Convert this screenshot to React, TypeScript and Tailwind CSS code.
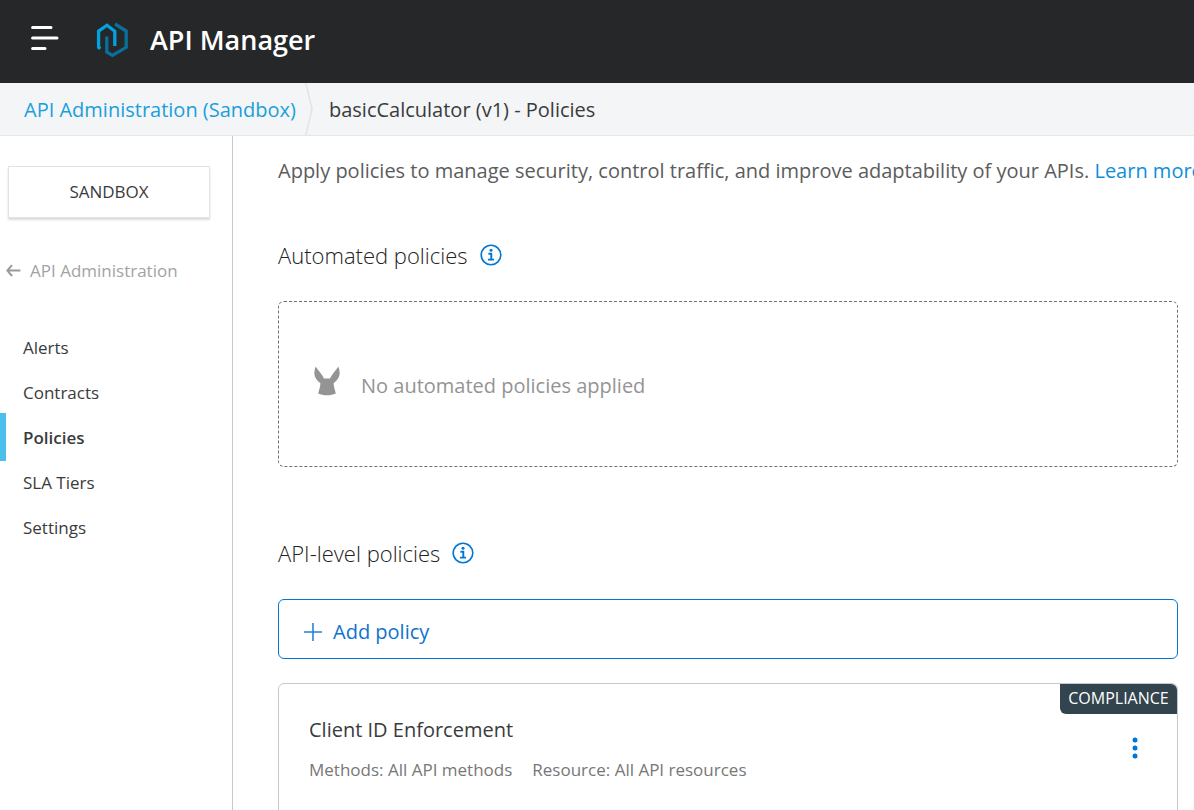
import React from "react";

const navItems = ["Alerts", "Contracts", "Policies", "SLA Tiers", "Settings"];

function Logo() {
  return (
    <svg width="32" height="36" viewBox="0 0 32 36" fill="none" strokeWidth="3.3" aria-hidden="true">
      <path d="M19 2 L30.2 9 V25.4 L16.4 33.4 L10.8 30 V14.4" stroke="#0a6f9b" />
      <path d="M4.4 26.6 L2.6 25.4 V9.2 L11 3.2 L18.8 9.2 V24" stroke="#00a2df" />
    </svg>
  );
}

function InfoIcon() {
  return (
    <svg width="22" height="22" viewBox="0 0 22 22" fill="none" aria-hidden="true">
      <circle cx="11" cy="11" r="9.8" stroke="#0176d3" strokeWidth="1.6" />
      <circle cx="11" cy="6.3" r="1.5" fill="#0176d3" />
      <path d="M8.4 9.8 H11.3 V15.4 M8 15.6 H14" stroke="#0176d3" strokeWidth="1.9" />
    </svg>
  );
}

function MuleIcon() {
  return (
    <svg width="26" height="30" viewBox="0 0 26 30" fill="#949494" aria-hidden="true">
      <path d="M1.6 0.6 C4 4 7.5 8 10 12.5 H16 C18.5 8 22 4 24.4 0.6 C26.8 7 26 13 19.6 17 C19.6 20.5 20.8 23.5 21.8 27.4 C17 29.8 9 29.8 4.2 27.4 C5.2 23.5 6.4 20.5 6.4 17 C0 13 -0.8 7 1.6 0.6 Z" />
    </svg>
  );
}

function SectionTitle({ children }: { children: string }) {
  return (
    <div className="flex h-8 items-center gap-3">
      <h2 className="text-[22px] leading-8 font-light text-[#222]">{children}</h2>
      <button type="button" aria-label={`About ${children}`} className="flex">
        <InfoIcon />
      </button>
    </div>
  );
}

export default function App() {
  return (
    <div className="flex min-h-screen flex-col overflow-x-hidden bg-white font-['Open_Sans','Noto_Sans',sans-serif] text-[#3a3b3c]">
      <header className="flex h-[83px] items-center bg-[#262728] pb-2 pl-[31px]">
        <button type="button" aria-label="Open menu" className="flex">
          <svg width="28" height="26" viewBox="0 0 28 26" stroke="#fff" strokeWidth="3" strokeLinecap="round" aria-hidden="true">
            <path d="M1.6 2.5 H20 M1.6 13 H26 M1.6 23.5 H14" />
          </svg>
        </button>
        <a href="#home" className="ml-[37px] flex items-center gap-[22px] pt-1">
          <Logo />
          <span className="text-[27px] leading-9 font-semibold text-white">API Manager</span>
        </a>
      </header>

      <nav aria-label="Breadcrumb" className="flex h-[53px] items-center border-b border-[#e5e6e8] bg-[#f4f5f6] pl-6 text-xl whitespace-nowrap">
        <a href="#administration" className="pt-0.5 text-[#1a9fdc]">API Administration (Sandbox)</a>
        <svg width="8" height="52" viewBox="0 0 8 52" fill="none" stroke="#e1e3e5" strokeWidth="1.5" className="mr-4 ml-[9px]" aria-hidden="true">
          <path d="M0.8 0 L7 26 L0.8 52" />
        </svg>
        <span className="pt-0.5">basicCalculator (v1) - Policies</span>
      </nav>

      <div className="flex grow">
        <aside className="w-[233px] shrink-0 border-r border-[#c9c9c9] pt-[30px]">
          <button type="button" className="ml-2 block h-[52px] w-[202px] border border-[#e3e3e3] bg-white pb-px text-[17px] shadow-[0_2px_2px_rgba(0,0,0,0.14)]">
            SANDBOX
          </button>
          <a href="#administration" className="mt-[41px] ml-[6px] flex h-6 items-center gap-[9px] text-[17px] text-[#a3a3a3]">
            <svg width="15" height="14" viewBox="0 0 15 14" fill="none" stroke="#9a9a9a" strokeWidth="2" aria-hidden="true">
              <path d="M1.4 6.6 H14.4 M6 1.2 L1.4 6.6 L6 12" />
            </svg>
            API Administration
          </a>
          <nav aria-label="API" className="mt-[42px] flex flex-col">
            {navItems.map((item) => (
              <a
                key={item}
                href={`#${item}`}
                className={
                  item === "Policies"
                    ? "-mt-0.5 -mb-px flex h-12 items-center border-l-6 border-[#49c0ec] pt-px pl-[17px] text-[17px] font-semibold"
                    : "flex h-[45px] items-center pl-[23px] text-[17px]"
                }
              >
                {item}
              </a>
            ))}
          </nav>
        </aside>

        <main className="min-w-0 grow pt-5 pr-4 pl-[45px]">
          <p className="text-xl leading-[30px] whitespace-nowrap text-[#5c5c5c]">
            Apply policies to manage security, control traffic, and improve adaptability of your APIs.{" "}
            <a href="#more" className="text-[#0d8fd8]">Learn more</a>
          </p>

          <section className="mt-[53px]">
            <SectionTitle>Automated policies</SectionTitle>
            <div className="mt-[30px] flex h-[166px] items-center gap-[21px] rounded-md border border-dashed border-[#707070] pl-[35px] text-xl text-[#949494]">
              <div className="pb-1.5">
                <MuleIcon />
              </div>
              <span className="pt-1">No automated policies applied</span>
            </div>
          </section>

          <section className="mt-[70px]">
            <SectionTitle>API-level policies</SectionTitle>
            <button type="button" className="mt-[30px] flex h-[60px] w-full items-center gap-[11px] rounded-md border border-[#0176d3] pt-1.5 pl-[25px] text-xl text-[#0f72cc]">
              <svg width="18" height="18" viewBox="0 0 18 18" stroke="#2583dc" strokeWidth="1.6" aria-hidden="true">
                <path d="M0 9 H18 M9 0 V18" />
              </svg>
              Add policy
            </button>

            <article className="mt-6 flex h-[140px] justify-between rounded-md border border-[#c9c9c9] pl-[30px]">
              <div className="pt-[30px]">
                <h3 className="text-xl leading-8">Client ID Enforcement</h3>
                <p className="mt-3 flex gap-5 text-[17px] leading-6 text-[#777]">
                  <span>Methods: All API methods</span>
                  <span>Resource: All API resources</span>
                </p>
              </div>
              <div className="flex flex-col items-end">
                <span className="flex h-[30px] w-[117px] items-center justify-center rounded-tr-md rounded-bl-md bg-[#32444d] pb-0.5 text-base text-white">
                  COMPLIANCE
                </span>
                <button type="button" aria-label="Policy actions" className="mt-[23px] mr-[39px] flex">
                  <svg width="6" height="22" viewBox="0 0 6 22" fill="#0176d3" aria-hidden="true">
                    <circle cx="3" cy="3" r="2.5" />
                    <circle cx="3" cy="11" r="2.5" />
                    <circle cx="3" cy="19" r="2.5" />
                  </svg>
                </button>
              </div>
            </article>
          </section>
        </main>
      </div>
    </div>
  );
}
